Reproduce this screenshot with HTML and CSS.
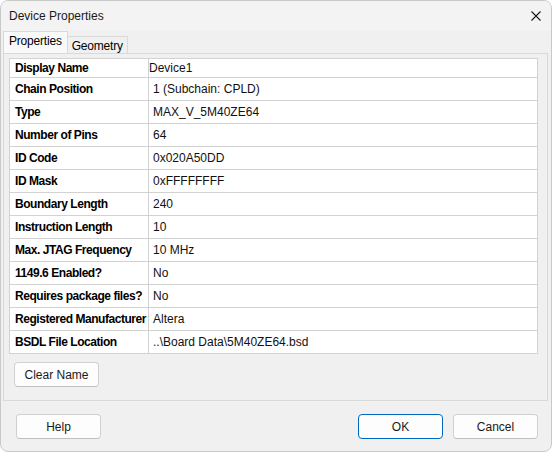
FILE: index.html
```html
<!DOCTYPE html>
<html lang="en">
<head>
  <meta charset="UTF-8">
  <title>Device Properties</title>
  <link rel="stylesheet" href="styles.css">
</head>
<body>

  <div class="window">
    <div class="titlebar">
      <span class="title">Device Properties</span>
      <svg class="close" width="10" height="10" viewBox="0 0 10 10">
        <path d="M0.5 0.5 L9.5 9.5 M9.5 0.5 L0.5 9.5" stroke="#1a1a1a" stroke-width="1.1" fill="none"/>
      </svg>
    </div>

    <div class="tabs">
      <div class="tab active">Properties</div>
      <div class="tab">Geometry</div>
    </div>

    <div class="panel">
      <table class="props">
        <tr class="first"><td class="key">Display Name</td><td class="val flush">Device1</td></tr>
        <tr><td class="key">Chain Position</td><td class="val">1 (Subchain: CPLD)</td></tr>
        <tr><td class="key">Type</td><td class="val">MAX_V_5M40ZE64</td></tr>
        <tr><td class="key">Number of Pins</td><td class="val">64</td></tr>
        <tr><td class="key">ID Code</td><td class="val">0x020A50DD</td></tr>
        <tr><td class="key">ID Mask</td><td class="val">0xFFFFFFFF</td></tr>
        <tr><td class="key">Boundary Length</td><td class="val">240</td></tr>
        <tr><td class="key">Instruction Length</td><td class="val">10</td></tr>
        <tr><td class="key">Max. JTAG Frequency</td><td class="val">10 MHz</td></tr>
        <tr><td class="key">1149.6 Enabled?</td><td class="val">No</td></tr>
        <tr><td class="key">Requires package files?</td><td class="val">No</td></tr>
        <tr><td class="key">Registered Manufacturer</td><td class="val">Altera</td></tr>
        <tr><td class="key">BSDL File Location</td><td class="val">..\Board Data\5M40ZE64.bsd</td></tr>
      </table>
      <button class="btn clear">Clear Name</button>
    </div>

    <div class="footer">
      <button class="btn">Help</button>
      <div class="spacer"></div>
      <button class="btn default">OK</button>
      <button class="btn">Cancel</button>
    </div>
  </div>

</body>
</html>
```

FILE: styles.css
```css
* {
  box-sizing: border-box;
}

html, body {
  margin: 0;
  padding: 0;
  background: #ffffff;
}

body {
  font-family: "Liberation Sans", Arial, sans-serif;
  font-size: 12px;
  color: #000000;
}

.window {
  width: 552px;
  height: 452px;
  border: 1px solid #c9c9c9;
  border-radius: 8px;
  background: #f0f0f0;
  overflow: hidden;
  display: flex;
  flex-direction: column;
}

.titlebar {
  height: 30px;
  background: #f3f3f3;
  display: flex;
  align-items: center;
  padding: 0 10px 0 8px;
}

.title {
  flex: 1;
  color: #1a1a1a;
}

.close {
  display: block;
}

/* tab strip */
.tabs {
  display: flex;
  align-items: flex-end;
  height: 22px;
  padding-left: 2px;
}

.tab {
  height: 17px;
  padding: 1px 4px 0 4px;
  border: 1px solid #d9d9d9;
  border-bottom: none;
  background: #f0f0f0;
  display: flex;
  align-items: center;
  margin-left: -1px;
  letter-spacing: -0.2px;
}

.tab.active {
  height: 22px;
  margin-left: 0;
  padding: 0 5px 3px 5px;
  background: #f9f9f9;
  position: relative;
  z-index: 1;
}

.panel {
  margin: 0 3px 0 2px;
  height: 348px;
  border: 1px solid #d9d9d9;
  background: #f0f0f0;
  padding: 4px 10px 0 5px;
}

.props {
  width: 529px;
  border-collapse: collapse;
  background: #ffffff;
  border: 1px solid #d2d2d2;
}

.props td {
  border: 1px solid #d2d2d2;
  height: 23px;
  padding: 0;
  white-space: nowrap;
}

.props tr.first td {
  height: 19px;
}

.key {
  width: 139px;
  padding-left: 5px !important;
  font-weight: bold;
  font-size: 12px;
  letter-spacing: -0.45px;
}

.val {
  padding-left: 4px !important;
  color: #111111;
}

.val.flush {
  padding-left: 0 !important;
}

.btn {
  font-family: "Liberation Sans", Arial, sans-serif;
  font-size: 12px;
  color: #1a1a1a;
  width: 85px;
  height: 25px;
  background: #fdfdfd;
  border: 1px solid #d0d0d0;
  border-bottom-color: #c0c0c0;
  border-radius: 4px;
  padding: 0;
}

.btn.clear {
  margin: 8px 0 0 5px;
}

.btn.default {
  border: 1px solid #0067c0;
}

.footer {
  display: flex;
  align-items: flex-start;
  gap: 10px;
  padding: 13px 13px 0 15px;
}

.spacer {
  flex: 1;
}
```
